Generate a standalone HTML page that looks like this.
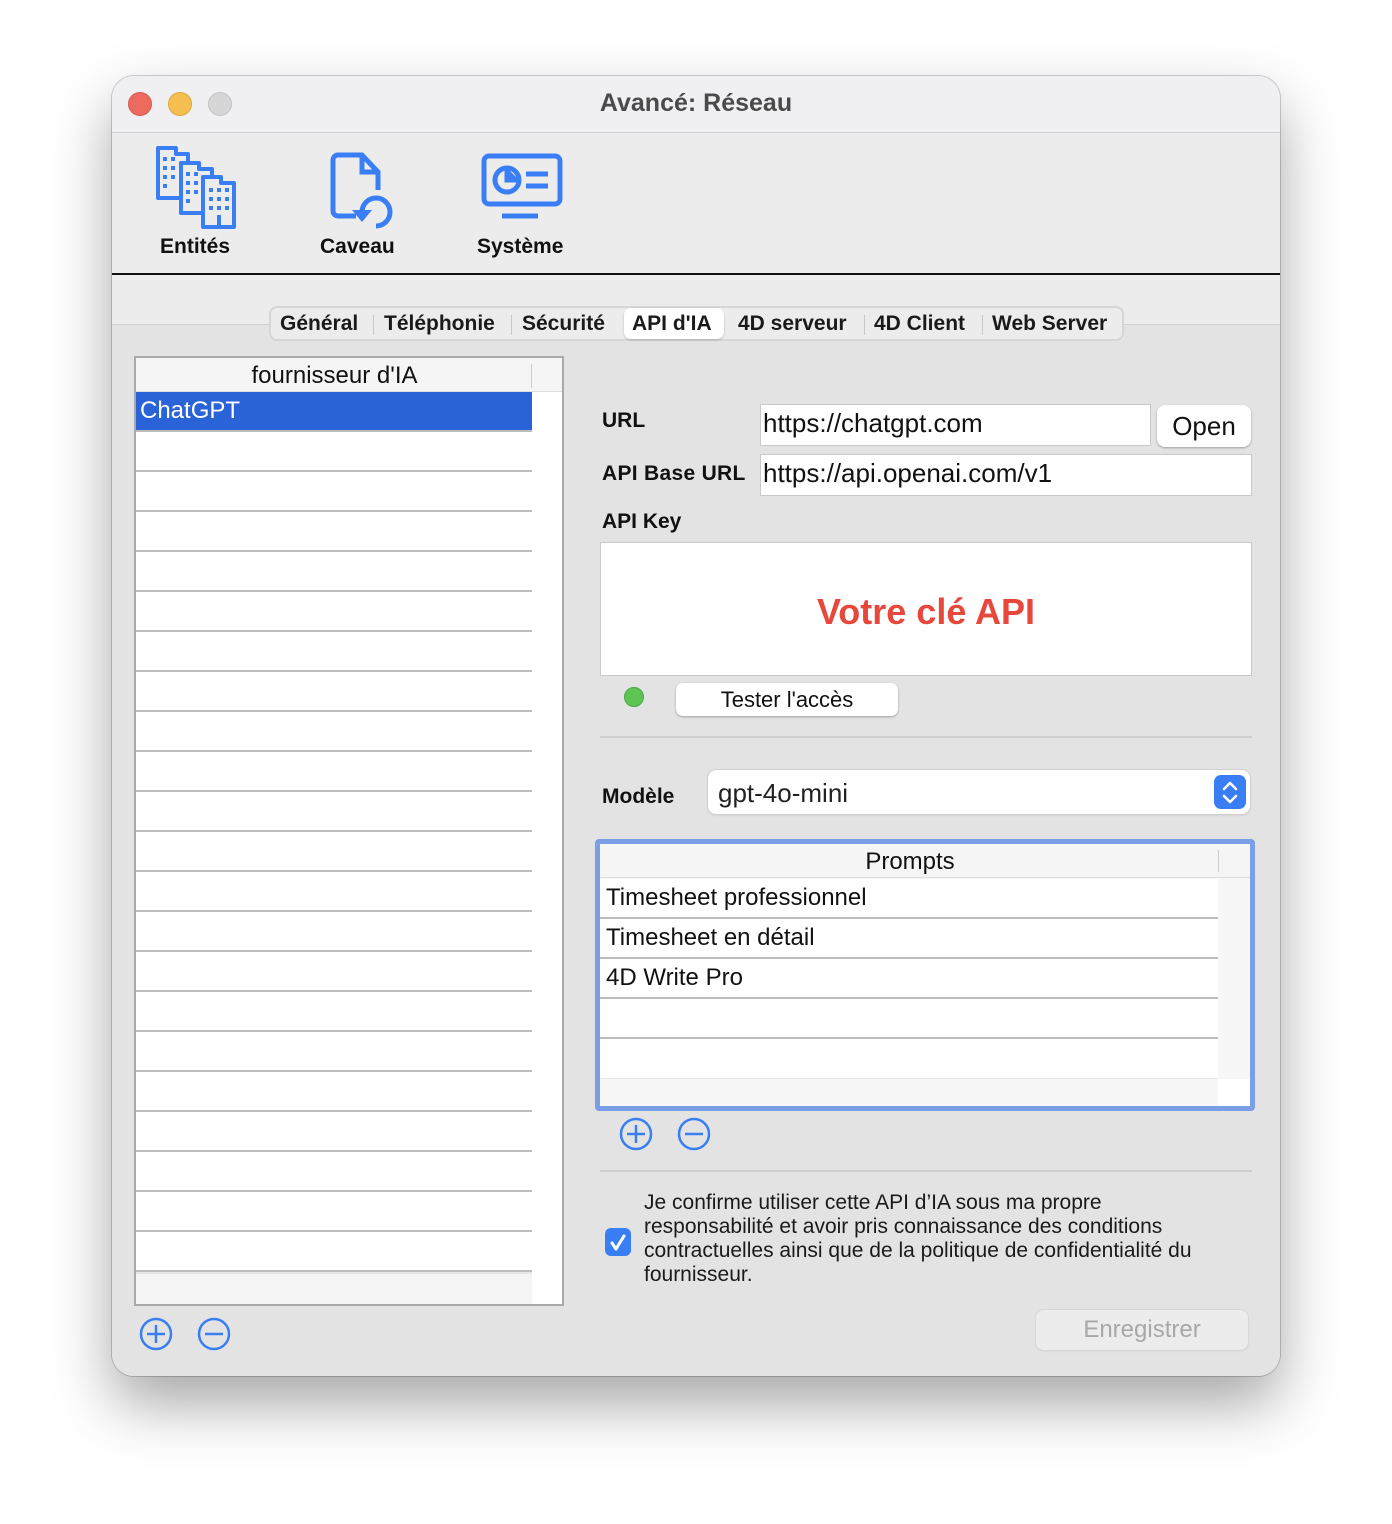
<!DOCTYPE html>
<html><head><meta charset="utf-8"><style>
*{box-sizing:border-box;margin:0;padding:0}
body{width:1392px;height:1524px;background:#fff;font-family:"Liberation Sans",Arial,sans-serif;position:relative;overflow:hidden}
.a{position:absolute}
.win{left:112px;top:76px;width:1168px;height:1300px;border-radius:22px;background:#ececec;box-shadow:0 28px 60px rgba(0,0,0,.35),0 0 0 1px rgba(0,0,0,.18);overflow:hidden}
.row{position:absolute;left:0;width:396px;height:40px;border-bottom:2px solid #bdbdbd;background:#fff}
.field{background:#fff;border:1px solid #c9c9c9;font-size:26px;color:#111;padding-left:2px;line-height:36px}
.lbl{font-size:21px;font-weight:bold;color:#111}
.pr{position:absolute;left:0;width:618px;height:40px;border-bottom:2px solid #bdbdbd;background:#fff;font-size:24px;padding-left:6px;line-height:38px;color:#111}
</style></head><body>
<div class="a win">
 <div class="a" style="left:0;top:0;width:1168px;height:57px;background:#f0f0f2;border-bottom:1px solid #cfcfcf"></div>
 <div class="a" style="left:16px;top:16px;width:24px;height:24px;border-radius:50%;background:#ed6a5e;border:1px solid #d45a4f"></div>
 <div class="a" style="left:56px;top:16px;width:24px;height:24px;border-radius:50%;background:#f5bf4f;border:1px solid #d9a53e"></div>
 <div class="a" style="left:96px;top:16px;width:24px;height:24px;border-radius:50%;background:#d6d6d6;border:1px solid #c4c4c4"></div>
 <div class="a" style="left:0;top:13px;width:1168px;text-align:center;font-size:25px;font-weight:bold;color:#4a4a4a">Avancé: Réseau</div>
 <div class="a" style="left:0;top:57px;width:1168px;height:142px;background:#ececec;border-bottom:2px solid #111"></div>
 <svg class="a" style="left:40px;top:66px" width="92" height="92" viewBox="0 0 92 92" fill="#ececec" stroke="#3a7ef5" stroke-width="4" stroke-linejoin="round">
  <path d="M6 56V6h18v6h12v44z"/>
  <path d="M29 71V21h18v6h13v44z"/>
  <path d="M51 85V35h18v6h13v44z"/>
  <g fill="#3a7ef5" stroke="none">
   <rect x="11" y="15" width="4" height="4"/><rect x="19" y="15" width="4" height="4"/><rect x="11" y="24" width="4" height="4"/><rect x="19" y="24" width="4" height="4"/><rect x="11" y="33" width="4" height="4"/><rect x="19" y="33" width="4" height="4"/><rect x="11" y="42" width="4" height="4"/>
   <rect x="34" y="30" width="4" height="4"/><rect x="42" y="30" width="4" height="4"/><rect x="34" y="39" width="4" height="4"/><rect x="42" y="39" width="4" height="4"/><rect x="34" y="48" width="4" height="4"/><rect x="42" y="48" width="4" height="4"/><rect x="34" y="57" width="4" height="4"/>
   <rect x="57" y="46" width="4" height="4"/><rect x="65" y="46" width="4" height="4"/><rect x="73" y="46" width="4" height="4"/><rect x="57" y="55" width="4" height="4"/><rect x="65" y="55" width="4" height="4"/><rect x="73" y="55" width="4" height="4"/><rect x="57" y="64" width="4" height="4"/><rect x="65" y="64" width="4" height="4"/><rect x="73" y="64" width="4" height="4"/><rect x="65" y="73" width="4" height="10"/>
  </g>
 </svg>
 <div class="a" style="left:48px;top:159px;font-size:21px;font-weight:bold;color:#111">Entités</div>
 <svg class="a" style="left:216px;top:76px" width="76" height="80" viewBox="0 0 76 80" fill="none" stroke="#3a7ef5" stroke-width="5">
  <path d="M28 64H10a5 5 0 0 1-5-5V8a5 5 0 0 1 5-5h24l16 17v18"/><path d="M34 3v17h16"/>
  <path d="M48 74a14 14 0 1 0-14-14"/><path d="M24 58h20l-10 12z" fill="#3a7ef5" stroke="none"/>
 </svg>
 <div class="a" style="left:208px;top:159px;font-size:21px;font-weight:bold;color:#111">Caveau</div>
 <svg class="a" style="left:368px;top:76px" width="84" height="68" viewBox="0 0 84 68" fill="none" stroke="#3a7ef5" stroke-width="5">
  <rect x="4" y="4" width="76" height="48" rx="5"/><circle cx="27" cy="28" r="12"/><path d="M27 16v12h12" fill="#3a7ef5"/>
  <path d="M46 22h22M46 34h22"/><path d="M22 64h36"/>
 </svg>
 <div class="a" style="left:365px;top:159px;font-size:21px;font-weight:bold;color:#111">Système</div>
 <div class="a" style="left:0;top:248px;width:1168px;height:1060px;background:#e3e3e3;border-top:1px solid #d0d0d0"></div>
 <div class="a" style="left:157px;top:230px;width:855px;height:35px;background:#ececec;border:2px solid #d6d6d6;border-radius:8px"></div>
 <div class="a" style="left:512px;top:232px;width:100px;height:31px;background:#fff;border-radius:7px;box-shadow:0 1px 2px rgba(0,0,0,.2)"></div>
 <div class="a" style="top:236px;left:168px;font-size:21px;font-weight:bold;color:#1a1a1a;white-space:nowrap">Général</div>
 <div class="a" style="top:236px;left:272px;font-size:21px;font-weight:bold;color:#1a1a1a">Téléphonie</div>
 <div class="a" style="top:236px;left:410px;font-size:21px;font-weight:bold;color:#1a1a1a">Sécurité</div>
 <div class="a" style="top:236px;left:520px;font-size:21px;font-weight:bold;color:#1a1a1a">API d'IA</div>
 <div class="a" style="top:236px;left:626px;font-size:21px;font-weight:bold;color:#1a1a1a">4D serveur</div>
 <div class="a" style="top:236px;left:762px;font-size:21px;font-weight:bold;color:#1a1a1a">4D Client</div>
 <div class="a" style="top:236px;left:880px;font-size:21px;font-weight:bold;color:#1a1a1a">Web Server</div>
 <div class="a" style="left:261px;top:239px;width:1px;height:20px;background:#c8c8c8"></div>
 <div class="a" style="left:399px;top:239px;width:1px;height:20px;background:#c8c8c8"></div>
 <div class="a" style="left:752px;top:239px;width:1px;height:20px;background:#c8c8c8"></div>
 <div class="a" style="left:870px;top:239px;width:1px;height:20px;background:#c8c8c8"></div>
 <div class="a" style="left:22px;top:280px;width:430px;height:950px;background:#f7f7f7;border:2px solid #a9a9a9;overflow:hidden">
  <div class="a" style="left:0;top:0;width:427px;height:34px;background:#f5f5f5;border-bottom:1px solid #ddd;text-align:center;font-size:24px;line-height:36px;color:#111;padding-right:30px">fournisseur d'IA</div>
  <div class="a" style="left:395px;top:6px;width:1px;height:24px;background:#ccc"></div>
  <div class="a" style="left:396px;top:34px;width:31px;height:915px;background:#fff"></div>
  <div class="a" style="left:0;top:34px;width:396px;height:40px;background:#2a62d8;color:#fff;font-size:24px;line-height:38px;padding-left:4px;border-bottom:2px solid #bdbdbd">ChatGPT</div>
  <div id="rows"></div>
 </div>
 <svg class="a" style="left:26px;top:1240px" width="100" height="36" fill="none" stroke="#3a7ef5" stroke-width="2.5"><circle cx="18" cy="18" r="15"/><path d="M18 9v18M9 18h18"/><circle cx="76" cy="18" r="15"/><path d="M67 18h18"/></svg>
 <div class="a lbl" style="left:490px;top:333px">URL</div>
 <div class="a field" style="left:648px;top:328px;width:391px;height:42px">https://chatgpt.com</div>
 <div class="a" style="left:1045px;top:329px;width:94px;height:42px;background:#fff;border-radius:8px;box-shadow:0 1px 2px rgba(0,0,0,.3);font-size:26px;text-align:center;line-height:42px;color:#111">Open</div>
 <div class="a lbl" style="left:490px;top:386px;letter-spacing:0.3px">API Base URL</div>
 <div class="a field" style="left:648px;top:378px;width:492px;height:42px">https://api.openai.com/v1</div>
 <div class="a lbl" style="left:490px;top:434px">API Key</div>
 <div class="a" style="left:488px;top:466px;width:652px;height:134px;background:#fff;border:1px solid #c9c9c9;text-align:center;line-height:138px;font-size:36px;font-weight:bold;color:#e8473c">Votre clé API</div>
 <div class="a" style="left:512px;top:611px;width:20px;height:20px;border-radius:50%;background:#5ec454;border:1px solid #4aa844"></div>
 <div class="a" style="left:564px;top:607px;width:222px;height:33px;background:#fff;border-radius:7px;box-shadow:0 1px 2px rgba(0,0,0,.3);text-align:center;font-size:22px;line-height:33px;color:#111">Tester l'accès</div>
 <div class="a" style="left:488px;top:660px;width:652px;height:2px;background:#cfcfcf"></div>
 <div class="a lbl" style="left:490px;top:709px">Modèle</div>
 <div class="a" style="left:596px;top:694px;width:542px;height:44px;background:#fff;border-radius:8px;box-shadow:0 0 0 1px #d0d0d0,0 1px 2px rgba(0,0,0,.15);font-size:26px;line-height:46px;padding-left:10px;color:#222">gpt-4o-mini</div>
 <div class="a" style="left:1102px;top:699px;width:32px;height:34px;background:#3a7ef5;border-radius:7px"></div>
 <svg class="a" style="left:1102px;top:699px" width="32" height="34" fill="none" stroke="#fff" stroke-width="2.5" stroke-linecap="round" stroke-linejoin="round"><path d="M10 14l6-6 6 6M10 21l6 6 6-6"/></svg>
 <div class="a" style="left:483px;top:763px;width:660px;height:272px;border:5px solid #7a9fe6;border-radius:4px;background:#f7f7f7;overflow:hidden">
  <div class="a" style="left:0;top:0;width:650px;height:34px;background:#f5f5f5;border-bottom:1px solid #ddd;text-align:center;font-size:24px;line-height:36px;color:#111;padding-right:30px">Prompts</div>
  <div class="a" style="left:618px;top:6px;width:1px;height:22px;background:#ccc"></div>
  <div class="pr" style="top:35px">Timesheet professionnel</div>
  <div class="pr" style="top:75px">Timesheet en détail</div>
  <div class="pr" style="top:115px">4D Write Pro</div>
  <div class="pr" style="top:155px"></div>
  <div class="pr" style="top:195px;border-bottom:1px solid #e6e6e6"></div>
  <div class="a" style="left:618px;top:235px;width:32px;height:30px;background:#fff"></div>
 </div>
 <svg class="a" style="left:506px;top:1040px" width="100" height="36" fill="none" stroke="#3a7ef5" stroke-width="2.5"><circle cx="18" cy="18" r="15"/><path d="M18 9v18M9 18h18"/><circle cx="76" cy="18" r="15"/><path d="M67 18h18"/></svg>
 <div class="a" style="left:488px;top:1094px;width:652px;height:2px;background:#cfcfcf"></div>
 <div class="a" style="left:493px;top:1152px;width:26px;height:28px;background:#3a7ef5;border-radius:6px"></div>
 <svg class="a" style="left:493px;top:1152px" width="26" height="28" fill="none" stroke="#fff" stroke-width="3" stroke-linecap="round" stroke-linejoin="round"><path d="M7 15l4 6 8-13"/></svg>
 <div class="a" style="left:532px;top:1115px;width:640px;font-size:21px;line-height:24px;color:#1a1a1a;white-space:nowrap">Je confirme utiliser cette API d’IA sous ma propre<br>responsabilité et avoir pris connaissance des conditions<br>contractuelles ainsi que de la politique de confidentialité du<br>fournisseur.</div>
 <div class="a" style="left:924px;top:1234px;width:212px;height:40px;background:#ececec;border-radius:8px;box-shadow:0 0 0 1px #d8d8d8,0 1px 2px rgba(0,0,0,.1);text-align:center;line-height:40px;font-size:24px;color:#a8a8a8">Enregistrer</div>
</div>
<script>
var r=document.getElementById('rows'),h='';
for(var y=74;y<914;y+=40)h+='<div class="row" style="top:'+y+'px"></div>';
h+='<div class="row" style="top:914px;height:33px;background:#f5f5f5;border-bottom:none;border-top:2px solid #e6e6e6"></div>';
r.outerHTML=h;
</script>
</body></html>
